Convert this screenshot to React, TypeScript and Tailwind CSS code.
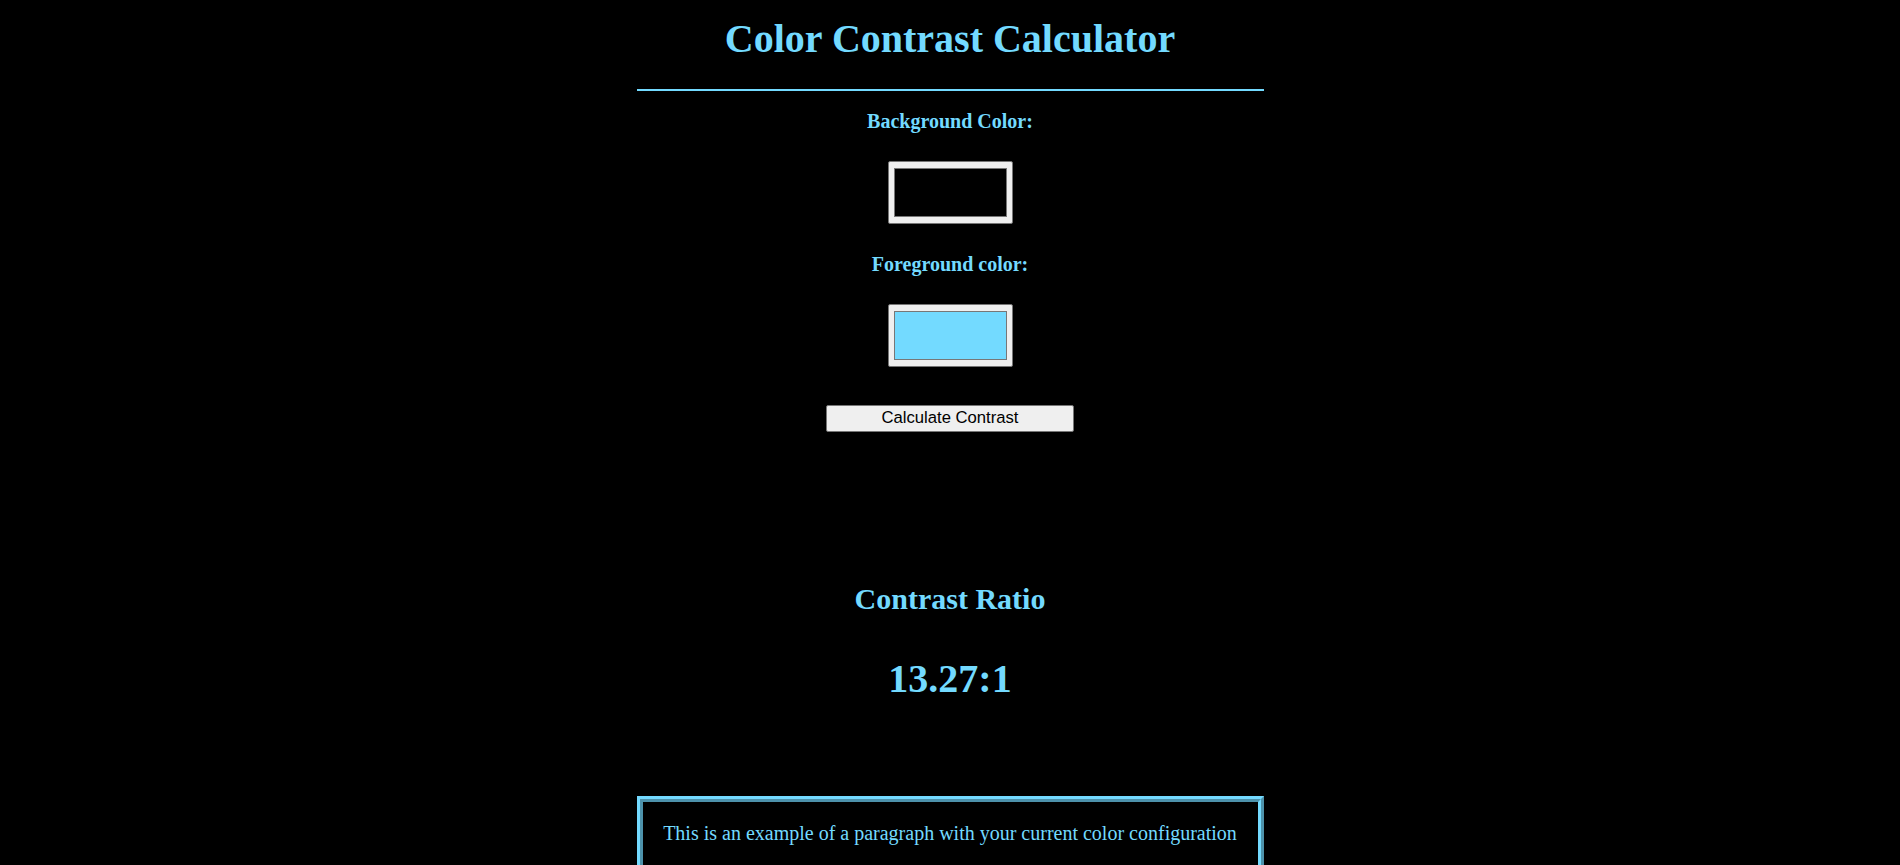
const ColorSwatch = ({ color }: { color: string }) => (
  <div className="w-[125px] h-[63px] border border-[#767676] rounded-[2px] bg-[#efefef] px-[5px] py-[6px] flex">
    <div
      className="flex-1 border border-[#777777]"
      style={{ backgroundColor: color }}
    />
  </div>
);

export default function App() {
  return (
    <div className="min-h-screen bg-black text-[#73daff] font-['Liberation_Serif','Times_New_Roman',serif]">
      <div className="w-[627px] mx-auto flex flex-col items-center pt-[16px]">
        <h1 className="text-[40px] leading-[46px] font-bold">
          Color Contrast Calculator
        </h1>

        <div className="w-full h-[2px] bg-[#73daff] mt-[27px]" />

        <label className="mt-[19px] text-[20px] leading-[23px] font-bold">
          Background Color:
        </label>
        <div className="mt-[28px]">
          <ColorSwatch color="#000000" />
        </div>

        <label className="mt-[29px] text-[20px] leading-[23px] font-bold">
          Foreground color:
        </label>
        <div className="mt-[28px]">
          <ColorSwatch color="#73daff" />
        </div>

        <button
          type="button"
          className="mt-[38px] w-[248px] h-[27px] bg-[#efefef] border border-[#767676] rounded-[2px] text-black text-[16.67px] leading-none font-['Liberation_Sans',Arial,sans-serif]"
        >
          Calculate Contrast
        </button>

        <h2 className="mt-[149px] text-[30px] leading-[35px] font-bold">
          Contrast Ratio
        </h2>
        <p className="mt-[40px] text-[40px] leading-[46px] font-bold">
          13.27:1
        </p>

        <div className="mt-[94px] w-full border-[6px] [border-style:ridge] border-[#73daff]">
          <p className="my-[20px] text-center text-[20px] leading-[23px]">
            This is an example of a paragraph with your current color
            configuration
          </p>
        </div>
      </div>
    </div>
  );
}
